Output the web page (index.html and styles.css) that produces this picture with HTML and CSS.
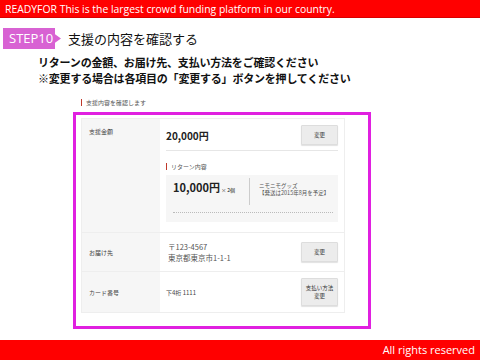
FILE: index.html
```html
<!DOCTYPE html>
<html lang="ja">
<head>
  <meta charset="UTF-8">
  <meta name="viewport" content="width=device-width, initial-scale=1.0">
  <title>READYFOR STEP10</title>
  <link rel="stylesheet" href="styles.css">
</head>
<body>
  <header class="top-bar">READYFOR This is the largest crowd funding platform in our country.</header>

  <main class="slide">
    <div class="step-row">
      <span class="step-badge">STEP10</span>
      <h1 class="step-title">支援の内容を確認する</h1>
    </div>

    <div class="lead">
      <p>リターンの金額、お届け先、支払い方法をご確認ください</p>
      <p>※変更する場合は各項目の「変更する」ボタンを押してください</p>
    </div>

    <div class="section-label">支援内容を確認します</div>

    <div class="highlight">
      <div class="confirm-table">
        <div class="row">
          <div class="label">支援金額</div>
          <div class="value">
            <div class="amount-line">
              <span class="amount">20,000円</span>
              <button type="button" class="change-btn">変更</button>
            </div>
            <div class="sub-label">リターン内容</div>
            <div class="return-box">
              <div class="return-top">
                <div class="return-price">10,000円<small> × 2個</small></div>
                <div class="return-name">ニモニモグッズ<br>【発送は2015年8月を予定】</div>
              </div>
              <div class="dots"></div>
            </div>
          </div>
        </div>

        <div class="row row-address">
          <div class="label">お届け先</div>
          <div class="value value-inline">
            <div class="address">
              <div>〒123-4567</div>
              <div>東京都東京市1-1-1</div>
            </div>
            <button type="button" class="change-btn">変更</button>
          </div>
        </div>

        <div class="row row-card">
          <div class="label">カード番号</div>
          <div class="value value-inline">
            <div class="card">下4桁 1111</div>
            <button type="button" class="change-btn tall">支払い方法<br>変更</button>
          </div>
        </div>
      </div>
    </div>
  </main>

  <footer class="bottom-bar">All rights reserved</footer>
</body>
</html>
```

FILE: styles.css
```css
body {
  margin: 0;
  width: 480px;
  height: 360px;
  display: flex;
  flex-direction: column;
  background: #fff;
  font-family: "Noto Sans CJK JP", "Noto Sans", sans-serif;
  overflow: hidden;
}
.top-bar {
  height: 18px;
  line-height: 18px;
  background: #ff0000;
  color: #fff;
  padding-left: 5px;
  font-family: "Open Sans", "Liberation Sans", sans-serif;
  font-size: 10.4px;
  border-bottom: 1px solid #d80000;
  box-sizing: border-box;
}
.slide {
  flex: 1;
}
.step-row {
  display: flex;
  align-items: center;
  margin: 10px 0 0 3px;
}
.step-badge {
  width: 58px;
  height: 21px;
  line-height: 21px;
  padding-left: 6px;
  box-sizing: border-box;
  background: #d862d3;
  color: #fff;
  font-family: "Open Sans", "Liberation Sans", sans-serif;
  font-size: 13px;
  clip-path: polygon(0 0, 52px 0, 52px 30%, 58px 50%, 52px 70%, 52px 100%, 0 100%);
}
.step-title {
  margin: 0 0 0 7px;
  font-size: 13px;
  font-weight: normal;
  color: #111;
}
.lead {
  margin: 5px 0 0 38px;
}
.lead p {
  margin: 0;
  height: 16px;
  font-size: 11px;
  line-height: 16px;
  font-weight: bold;
  letter-spacing: -0.2px;
  color: #111;
}
.section-label {
  margin: 13px 0 0 81px;
  padding-left: 4px;
  border-left: 1px solid #c0392b;
  font-size: 6px;
  line-height: 7px;
  color: #555;
}
.highlight {
  margin: 6px 0 0 73px;
  width: 298px;
  height: 217px;
  border: 3px solid #e020e0;
  box-sizing: border-box;
  padding: 3px 0 0 5px;
}
.confirm-table {
  width: 264px;
  border: 1px solid #eee;
  box-sizing: border-box;
}
.row {
  display: grid;
  grid-template-columns: 78px 1fr;
  border-top: 1px solid #eee;
}
.row:first-child {
  border-top: none;
}
.row-address {
  min-height: 38px;
}
.row-card {
  min-height: 40px;
}
.label {
  background: #f6f6f6;
  padding-left: 7px;
  font-size: 6px;
  color: #444;
}
.row:first-child .label {
  padding-top: 8px;
}
.row:not(:first-child) .label {
  display: flex;
  align-items: center;
}
.value {
  padding: 6px 6px 10px 6px;
  font-size: 7px;
  color: #444;
}
.value-inline {
  display: flex;
  align-items: center;
  justify-content: space-between;
  padding-top: 4px;
  padding-bottom: 4px;
}
.amount-line {
  display: flex;
  align-items: center;
  justify-content: space-between;
  padding-bottom: 5px;
  border-bottom: 1px solid #e6e6e6;
}
.amount {
  font-size: 10px;
  font-weight: bold;
  color: #222;
}
.change-btn {
  width: 37px;
  height: 20px;
  padding: 0;
  background: #ececec;
  border: 1px solid #ddd;
  border-radius: 1px;
  box-shadow: 0 1px 1px rgba(0, 0, 0, 0.12);
  font-family: "Noto Sans CJK JP", sans-serif;
  font-size: 5.5px;
  line-height: 8px;
  color: #333;
}
.change-btn.tall {
  height: 28px;
}
.sub-label {
  margin: 12px 0 0 0;
  padding-left: 4px;
  border-left: 1px solid #c0392b;
  font-size: 6px;
  line-height: 7px;
  color: #555;
}
.return-box {
  margin-top: 5px;
  background: #f6f6f6;
  padding: 6px 5px 9px 7px;
}
.return-top {
  display: flex;
  align-items: flex-start;
}
.return-price {
  width: 76px;
  font-size: 11px;
  font-weight: bold;
  color: #222;
  line-height: 13px;
}
.return-price small {
  font-size: 5px;
  font-weight: normal;
}
.return-name {
  margin-top: -3px;
  padding: 5px 0 8px 9px;
  border-left: 1px solid #ccc;
  font-size: 5.5px;
  line-height: 7px;
  color: #555;
}
.dots {
  margin-top: 7px;
  border-top: 1px dotted #bbb;
}
.address {
  margin-left: 2px;
  font-size: 7.5px;
  line-height: 11px;
  color: #555;
}
.card {
  font-size: 6px;
  color: #444;
}
.bottom-bar {
  height: 20px;
  line-height: 20px;
  background: #ff0000;
  color: #fff;
  text-align: right;
  padding-right: 5px;
  font-family: "Open Sans", "Liberation Sans", sans-serif;
  font-size: 11px;
}
```
